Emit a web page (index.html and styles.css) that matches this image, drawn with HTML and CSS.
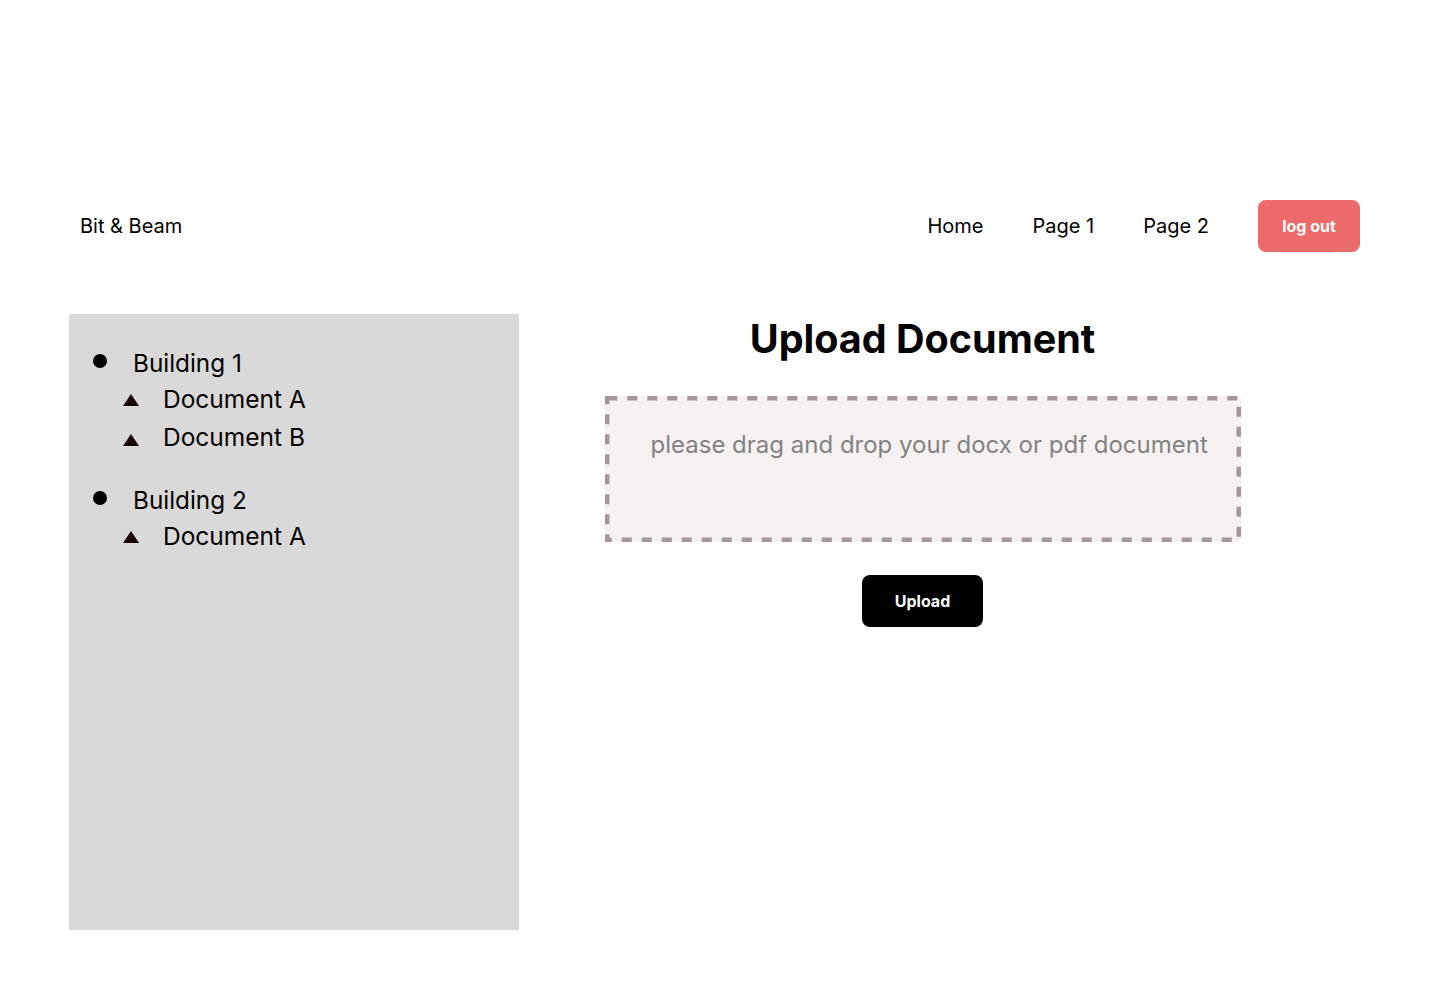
FILE: index.html
```html
<!DOCTYPE html>
<html lang="en">
<head>
<meta charset="utf-8">
<title>Bit &amp; Beam</title>
<link rel="stylesheet" href="styles.css">
</head>
<body>
<header class="topbar">
  <div class="brand">Bit &amp; Beam</div>
  <nav class="nav">
    <a class="nav-link" href="#">Home</a>
    <a class="nav-link" href="#">Page 1</a>
    <a class="nav-link" href="#">Page 2</a>
    <button class="btn-logout">log out</button>
  </nav>
</header>
<main class="layout">
  <aside class="sidebar">
    <ul class="tree">
      <li class="building">
        <div class="building-row"><span class="dot"></span><span>Building 1</span></div>
        <ul class="docs">
          <li class="doc"><span class="tri"></span><span>Document A</span></li>
          <li class="doc doc-low"><span class="tri"></span><span>Document B</span></li>
        </ul>
      </li>
      <li class="building">
        <div class="building-row"><span class="dot"></span><span>Building 2</span></div>
        <ul class="docs">
          <li class="doc"><span class="tri"></span><span>Document A</span></li>
        </ul>
      </li>
    </ul>
  </aside>
  <section class="content">
    <h1 class="title">Upload Document</h1>
    <div class="dropzone">
      <svg class="dropzone-border" width="100%" height="100%" preserveAspectRatio="none">
        <rect x="2.25" y="2.25" width="631.5" height="141.5" fill="none" stroke="#a69898" stroke-width="4.5" stroke-dasharray="10 10"></rect>
      </svg>
      <p class="dropzone-text">please drag and drop your docx or pdf document</p>
    </div>
    <button class="btn-upload">Upload</button>
  </section>
</main>
</body>
</html>
```

FILE: styles.css
```css
* { box-sizing: border-box; }
html, body { margin: 0; padding: 0; background: #fff; }
body {
  font-family: Inter, "Noto Sans", "Liberation Sans", sans-serif;
  color: #000;
  width: 1440px;
  height: 992px;
  overflow: hidden;
}

.topbar {
  display: flex;
  align-items: center;
  justify-content: space-between;
  margin-top: 200px;
  height: 52px;
  padding: 0 80px;
}
.brand { font-size: 20px; }
.nav { display: flex; align-items: center; }
.nav-link {
  font-size: 20px;
  color: #000;
  text-decoration: none;
  margin-right: 49px;
}
.btn-logout {
  width: 102px;
  height: 52px;
  border: none;
  border-radius: 8px;
  background: #eb6a6a;
  color: #fff;
  font-family: inherit;
  font-weight: 700;
  font-size: 16px;
  padding: 0;
}

.layout {
  display: flex;
  margin-top: 62px;
  padding-left: 69px;
}
.sidebar {
  width: 450px;
  height: 616px;
  background: #d9d9d9;
  padding: 32px 0 0 24px;
}
.tree, .docs { list-style: none; margin: 0; padding: 0; }
.building { margin-bottom: 27px; }
.building-row {
  display: flex;
  align-items: center;
  font-size: 24.3px;
  height: 34px;
}
.dot {
  width: 14px;
  height: 14px;
  border-radius: 50%;
  background: #000;
  margin-right: 26px;
  margin-top: -4px;
}
.doc {
  display: flex;
  align-items: center;
  font-size: 24.5px;
  height: 38px;
  padding-left: 30px;
}
.tri {
  width: 0;
  height: 0;
  border-left: 8.5px solid transparent;
  border-right: 8.5px solid transparent;
  border-bottom: 12px solid #1a0505;
  margin-right: 24px;
  margin-top: 2px;
}
.doc-low .tri { margin-top: 6px; }

.content {
  flex: 1;
  display: flex;
  flex-direction: column;
  align-items: center;
  padding-right: 114px;
}
.title {
  font-size: 39.5px;
  font-weight: 700;
  margin: 0;
  line-height: 50px;
}
.dropzone {
  position: relative;
  width: 636px;
  height: 146px;
  margin-top: 32px;
  background: #f7f2f2;
  padding: 34px 0 0 46px;
}
.dropzone-border {
  position: absolute;
  inset: 0;
}
.dropzone-text {
  margin: 0;
  font-size: 24px;
  line-height: 30px;
  color: #828282;
}
.btn-upload {
  margin-top: 33px;
  width: 121px;
  height: 52px;
  border: none;
  border-radius: 8px;
  background: #000;
  color: #fff;
  font-family: inherit;
  font-weight: 700;
  font-size: 16px;
  padding: 0;
}
```
